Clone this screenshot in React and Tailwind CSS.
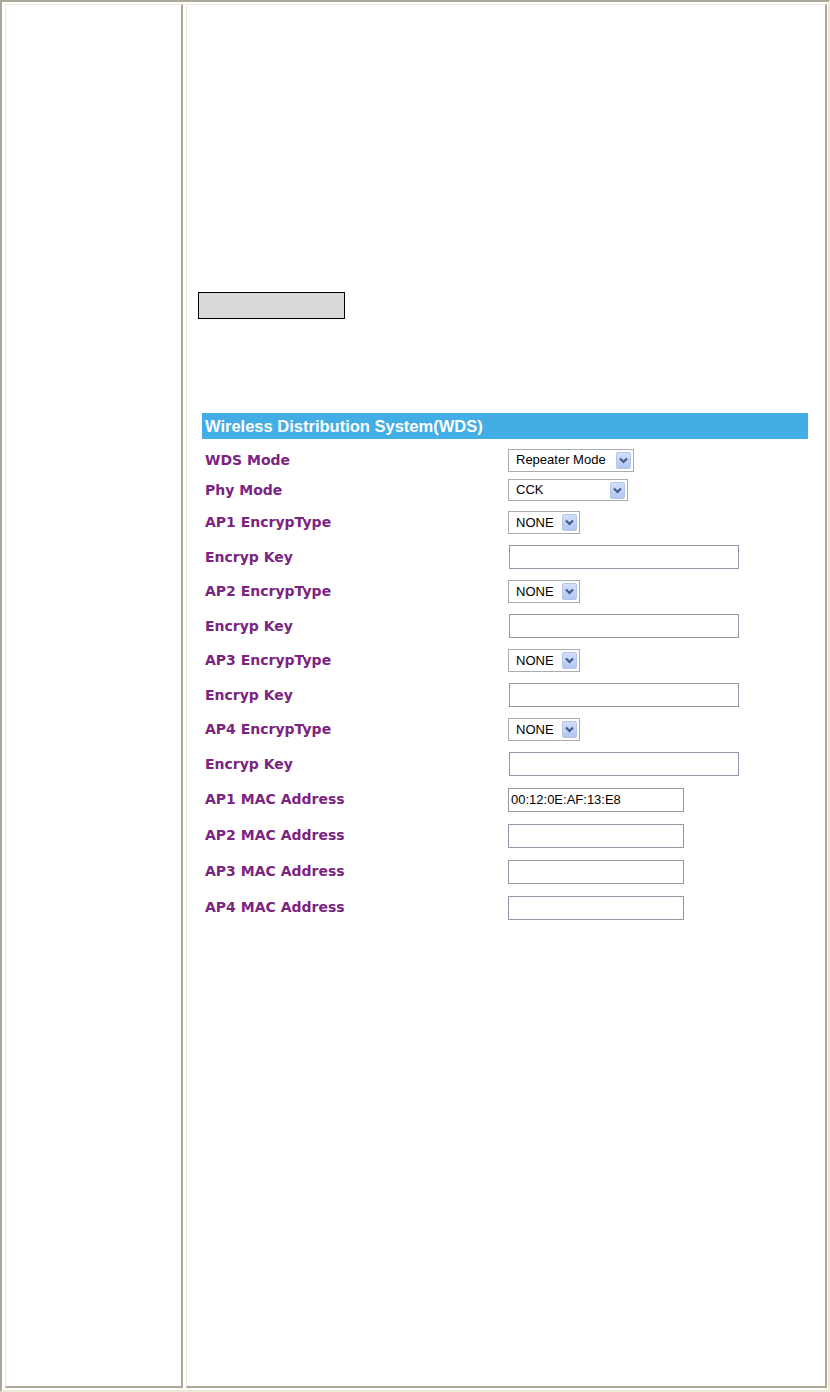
import React from "react";

const label = "font-['DejaVu_Sans',sans-serif] font-bold text-[14px] text-[#7b2481]";
const ctrl = "font-['Liberation_Sans',Arial,sans-serif] text-[13px] text-black";

function Arrow() {
  return (
    <div className="w-[15px] h-[17px] rounded-[2px] bg-gradient-to-b from-[#d2dffb] to-[#b2c6f0] border border-[#b4c4ea] flex items-center justify-center">
      <svg width="9" height="7" viewBox="0 0 9 7">
        <path d="M1 1.5 L4.5 5 L8 1.5" fill="none" stroke="#3f5a8c" strokeWidth="2.2" />
      </svg>
    </div>
  );
}

function Select({ value, w, h = "h-[23px]" }) {
  return (
    <div className={`${w} ${h} border border-[#a5acb2] bg-white flex items-center justify-between pl-[7px] pr-[2px] ${ctrl}`}>
      <span>{value}</span>
      <Arrow />
    </div>
  );
}

function Input({ value = "", w }) {
  return (
    <div className={`${w} h-[24px] border border-[#8f9aa6] bg-white flex items-center pl-[2px] ${ctrl}`}>
      {value}
    </div>
  );
}

function Row({ h, name, children }) {
  return (
    <div className={`${h} flex items-center`}>
      <div className={`w-[303px] ${label}`}>{name}</div>
      <div>{children}</div>
    </div>
  );
}

export default function App() {
  const keyRows = [
    ["AP1 EncrypType", "Encryp Key"],
    ["AP2 EncrypType", "Encryp Key"],
    ["AP3 EncrypType", "Encryp Key"],
    ["AP4 EncrypType", "Encryp Key"],
  ];
  return (
    <div className="w-[830px] h-[1392px] bg-white border-2 border-t-[#aca899] border-l-[#aca899] border-r-[#ece9d8] border-b-[#ece9d8] pt-[2px] pl-[3px] pr-[1px] pb-[2px] flex gap-[3px]">
      <div className="w-[178px] h-full border-l border-t border-[#ece9d8] border-r-2 border-b-2 border-r-[#aca899] border-b-[#aca899]" />
      <div className="w-[641px] h-full border-l border-t border-[#ece9d8] border-r-2 border-b-2 border-r-[#aca899] border-b-[#aca899]">
        <div className="ml-[11px] mt-[287px] w-[147px] h-[27px] border border-black bg-[#d9d9d9]" />
        <div className="ml-[15px] mt-[94px] w-[606px]">
          <div className="h-[26px] bg-[#43aee6] flex items-center pl-[3px] font-['Liberation_Sans',Arial,sans-serif] font-bold text-[16.5px] text-white">
            Wireless Distribution System(WDS)
          </div>
          <div className="mt-[6px] pl-[3px]">
            <Row h="h-[30px]" name="WDS Mode">
              <Select value="Repeater Mode" w="w-[126px]" />
            </Row>
            <Row h="h-[30px]" name="Phy Mode">
              <Select value="CCK" w="w-[120px]" h="h-[22px]" />
            </Row>
            {keyRows.map(([a, b], i) => (
              <React.Fragment key={a}>
                <Row h={i === 0 ? "h-[35px]" : "h-[34.5px]"} name={a}>
                  <Select value="NONE" w="w-[72px]" />
                </Row>
                <Row h="h-[34.5px]" name={b}>
                  <div className="ml-[1px]">
                    <Input w="w-[230px]" />
                  </div>
                </Row>
              </React.Fragment>
            ))}
            {["AP1", "AP2", "AP3", "AP4"].map((ap, i) => (
              <Row key={ap} h="h-[36px]" name={`${ap} MAC Address`}>
                <Input w="w-[176px]" value={i === 0 ? "00:12:0E:AF:13:E8" : ""} />
              </Row>
            ))}
          </div>
        </div>
      </div>
    </div>
  );
}
